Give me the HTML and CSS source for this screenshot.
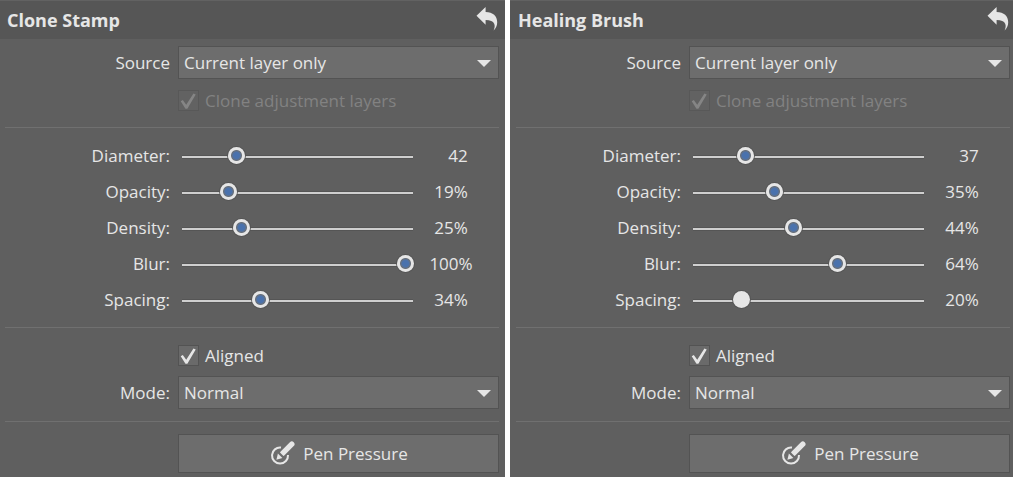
FILE: index.html
```html
<!DOCTYPE html>
<html lang="en">
<head>
  <meta charset="UTF-8">
  <title>Brush Options</title>
  <meta name="viewport" content="width=device-width, initial-scale=1">
  <link rel="stylesheet" href="styles.css">
</head>
<body>
  <svg width="0" height="0" class="sprite" aria-hidden="true">
    <symbol id="icon-back" viewBox="0 0 22 24">
      <path d="M0.500 8.800 9.600 0V5C17 5.200 21.200 9 21.200 15.200c0 3.400-1.300 6.200-3.600 8.200 1.200-2.400 1.400-4.800.6-6.600-1.100-2.600-3.900-3.800-8.600-3.800V17.800Z" fill="#e6e6e6"/>
    </symbol>
    <symbol id="icon-pen" viewBox="0 0 26 26">
      <path d="M12 6.600A8 8 0 1 0 19 14" fill="none" stroke="#e6e6e6" stroke-width="2"/>
      <path d="M22.800 3.200 13.600 12.400" fill="none" stroke="#e6e6e6" stroke-width="5.400" stroke-linecap="round"/>
      <path d="M10 10.600 15.400 16 13 18.400 7.600 18.800 8.200 13Z" fill="#6d6d6d"/>
      <path d="M8.900 12.600 13.400 17.100 7.400 18.800Z" fill="#e6e6e6"/>
    </symbol>
  </svg>

  <main class="panels">
    <section class="panel">
      <header class="panel-header">
        <h2>Clone Stamp</h2>
        <button class="btn-back" aria-label="Reset"><svg><use href="#icon-back"/></svg></button>
      </header>
      <div class="group source">
        <div class="row">
          <label class="name" for="csSource">Source</label>
          <div class="select"><select id="csSource"><option>Current layer only</option></select></div>
        </div>
        <div class="row">
          <label class="check disabled"><input type="checkbox" checked disabled>Clone adjustment layers</label>
        </div>
      </div>
      <div class="group sliders">
        <div class="row">
          <label class="name" for="csDiameter">Diameter:</label>
          <div class="slider"><input type="range" id="csDiameter" value="23"><output class="px" for="csDiameter">42</output></div>
        </div>
        <div class="row">
          <label class="name" for="csOpacity">Opacity:</label>
          <div class="slider"><input type="range" id="csOpacity" value="19"><output for="csOpacity">19%</output></div>
        </div>
        <div class="row">
          <label class="name" for="csDensity">Density:</label>
          <div class="slider"><input type="range" id="csDensity" value="25"><output for="csDensity">25%</output></div>
        </div>
        <div class="row">
          <label class="name" for="csBlur">Blur:</label>
          <div class="slider"><input type="range" id="csBlur" value="100"><output for="csBlur">100%</output></div>
        </div>
        <div class="row">
          <label class="name" for="csSpacing">Spacing:</label>
          <div class="slider"><input type="range" id="csSpacing" value="34"><output for="csSpacing">34%</output></div>
        </div>
      </div>
      <div class="group mode">
        <div class="row">
          <label class="check"><input type="checkbox" checked>Aligned</label>
        </div>
        <div class="row">
          <label class="name" for="csMode">Mode:</label>
          <div class="select"><select id="csMode"><option>Normal</option></select></div>
        </div>
      </div>
      <div class="group pressure">
        <div class="row">
          <button class="btn-pen"><svg><use href="#icon-pen"/></svg>Pen Pressure</button>
        </div>
      </div>
    </section>

    <section class="panel panel-right">
      <header class="panel-header">
        <h2>Healing Brush</h2>
        <button class="btn-back" aria-label="Reset"><svg><use href="#icon-back"/></svg></button>
      </header>
      <div class="group source">
        <div class="row">
          <label class="name" for="hbSource">Source</label>
          <div class="select"><select id="hbSource"><option>Current layer only</option></select></div>
        </div>
        <div class="row">
          <label class="check disabled"><input type="checkbox" checked disabled>Clone adjustment layers</label>
        </div>
      </div>
      <div class="group sliders">
        <div class="row">
          <label class="name" for="hbDiameter">Diameter:</label>
          <div class="slider"><input type="range" id="hbDiameter" value="22"><output class="px" for="hbDiameter">37</output></div>
        </div>
        <div class="row">
          <label class="name" for="hbOpacity">Opacity:</label>
          <div class="slider"><input type="range" id="hbOpacity" value="35"><output for="hbOpacity">35%</output></div>
        </div>
        <div class="row">
          <label class="name" for="hbDensity">Density:</label>
          <div class="slider"><input type="range" id="hbDensity" value="44"><output for="hbDensity">44%</output></div>
        </div>
        <div class="row">
          <label class="name" for="hbBlur">Blur:</label>
          <div class="slider"><input type="range" id="hbBlur" value="64"><output for="hbBlur">64%</output></div>
        </div>
        <div class="row">
          <label class="name" for="hbSpacing">Spacing:</label>
          <div class="slider"><input type="range" id="hbSpacing" class="active" value="20"><output for="hbSpacing">20%</output></div>
        </div>
      </div>
      <div class="group mode">
        <div class="row">
          <label class="check"><input type="checkbox" checked>Aligned</label>
        </div>
        <div class="row">
          <label class="name" for="hbMode">Mode:</label>
          <div class="select"><select id="hbMode"><option>Normal</option></select></div>
        </div>
      </div>
      <div class="group pressure">
        <div class="row">
          <button class="btn-pen"><svg><use href="#icon-pen"/></svg>Pen Pressure</button>
        </div>
      </div>
    </section>
  </main>
</body>
</html>
```
FILE: styles.css
```css
* {
  box-sizing: border-box;
}
body {
  margin: 0;
  background: #fff;
  color: #e6e6e6;
  font-family: "Open Sans", "Noto Sans", sans-serif;
  font-size: 17px;
  line-height: 24px;
}
.sprite {
  position: absolute;
}
.panels {
  display: grid;
  grid-template-columns: 505fr 503fr;
  gap: 5px;
}
.panel {
  background: #5f5f5f;
  border-top: 1px solid #626262;
  padding: 0 6px 4px 5px;
}
.panel-right {
  padding-left: 6px;
  padding-right: 3px;
}
.panel-header {
  display: flex;
  align-items: center;
  justify-content: space-between;
  height: 38px;
  margin: 0 -6px 0 -5px;
  padding: 0 7px;
  background: #565656;
}
.panel-right .panel-header {
  margin: 0 -3px 0 -6px;
  padding: 0 4px 0 8px;
}
h2 {
  margin: 0;
  font-size: 18px;
  font-weight: bold;
}
button,
select {
  font: inherit;
  color: inherit;
}
.btn-back {
  padding: 0 0 2px;
  border: none;
  background: none;
}
.btn-back svg {
  display: block;
  width: 22px;
  height: 24px;
}

/* groups are split by a thin line */
.group {
  display: flex;
  flex-direction: column;
  border-bottom: 1px solid #707070;
}
.group:last-child {
  border-bottom: none;
}
.source {
  gap: 11px;
  padding: 7px 0 16px;
}
.sliders {
  gap: 12px;
  padding: 16px 0 15px;
}
.mode {
  gap: 10px;
  padding: 17px 0 12px;
}
.pressure {
  padding-top: 12px;
}
.row {
  display: grid;
  grid-template-columns: 165px 1fr;
  column-gap: 8px;
  align-items: center;
}
.name {
  text-align: right;
}
.select,
.check,
.btn-pen {
  grid-column: 2;
}

.select {
  position: relative;
}
.select::after {
  content: "";
  position: absolute;
  right: 8px;
  top: 14px;
  width: 14px;
  height: 7px;
  background: #e6e6e6;
  clip-path: polygon(0 0, 100% 0, 50% 100%);
  pointer-events: none;
}
select {
  display: block;
  appearance: none;
  width: 100%;
  height: 33px;
  padding: 1px 28px 0 5px;
  border: 1px solid #535353;
  border-radius: 0;
  background: #6d6d6d;
}

.check {
  display: flex;
  align-items: center;
  gap: 6px;
  height: 21px;
}
.check input {
  appearance: none;
  width: 21px;
  height: 21px;
  margin: 0;
  border: 1px solid #535353;
  background: #6a6a6a;
}
.check input::before {
  content: "";
  display: block;
  width: 19px;
  height: 19px;
  background: #e6e6e6;
  clip-path: polygon(9% 54%, 20% 48%, 38% 73%, 76% 13%, 88% 18%, 44% 93%, 34% 93%);
}
.check.disabled {
  color: #828282;
}
.check.disabled input {
  border-color: #585858;
  background: #626262;
}
.check.disabled input::before {
  background: #858585;
}

.slider {
  display: grid;
  grid-template-columns: 236fr 85fr;
  align-items: center;
}
.slider output {
  width: 74px;
  text-align: center;
}
.slider .px {
  padding-left: 14px;
}
input[type="range"] {
  appearance: none;
  width: 100%;
  height: 19px;
  margin: 0;
  background: none;
}
input[type="range"]::-webkit-slider-runnable-track {
  height: 19px;
  background: linear-gradient(#555 0 1px, #cfcfcf 1px 3px, #555 3px 4px) 4px 8px / calc(100% - 5px) 4px no-repeat;
}
input[type="range"]::-webkit-slider-thumb {
  appearance: none;
  width: 17px;
  height: 17px;
  border-radius: 50%;
  background: radial-gradient(circle, #4a72ad 0 3px, #69717c 5px, #e6e6e6 6px);
  box-shadow: 0 0 0 1px #555;
}
input[type="range"].active::-webkit-slider-thumb {
  background: #e6e6e6;
}

.btn-pen {
  display: flex;
  align-items: center;
  justify-content: center;
  gap: 8px;
  height: 39px;
  padding-top: 2px;
  border: 1px solid #535353;
  background: #6d6d6d;
}
.btn-pen svg {
  width: 26px;
  height: 26px;
}
```
